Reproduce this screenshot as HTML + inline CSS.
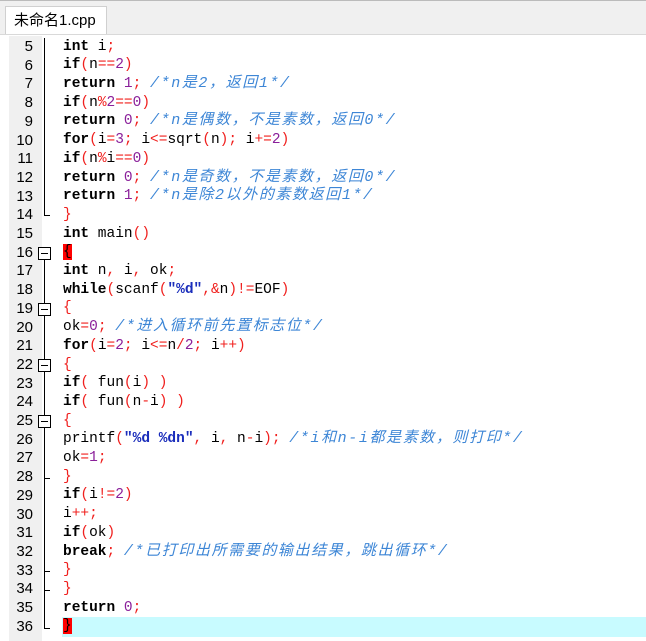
<!DOCTYPE html><html><head><meta charset="utf-8"><style>
body{margin:0;width:646px;height:641px;background:#fff;overflow:hidden;position:relative;font-family:"Liberation Mono","Noto Sans CJK SC",monospace}
.tabbar{position:absolute;left:0;top:0;width:646px;height:34px;background:#f0f0f0;border-top:1px solid #bbb}
.tab{position:absolute;left:5px;top:5px;width:102px;height:29px;background:#fff;border:1px solid #d0d0d0;border-bottom:none;font:15px "Liberation Sans","Noto Sans CJK SC",sans-serif;line-height:27px;padding-left:8px;box-sizing:border-box;color:#000}
.edge{position:absolute;left:0;top:34px;width:646px;height:1px;background:#d9d9d9}
.gut{position:absolute;left:9px;top:36px;width:33px;height:605px;background:#f0f0f0}
.vl{position:absolute;left:44px;width:1px;background:#000}
.box{position:absolute;left:38px;width:13px;height:13px;border:1px solid #000;background:#fff;box-sizing:border-box}
.box:after{content:"";position:absolute;left:2px;top:5px;width:7px;height:1px;background:#000}
.tk{position:absolute;left:44px;width:6px;height:1px;background:#000}
.ln{position:absolute;left:9px;width:24px;text-align:right;font:15px "Liberation Sans",sans-serif;color:#000}
.code{position:absolute;left:63px;top:37.6px;font-size:14.5px;line-height:18.7px;white-space:pre;color:#000}
.cur{position:absolute;left:62px;top:617px;width:584px;height:20px;background:#c8fbff}
b{font-weight:bold}
.p{color:#f0201e}.n{color:#8a1f9a}.c{color:#3d86d6;font-style:italic;font-size:15px;letter-spacing:1.6px}.s{color:#1a2dbb;font-weight:bold}
.hl{background:#f00;color:#000}
</style></head><body>
<div class="tabbar"><div class="tab">未命名1.cpp</div></div>
<div class="edge"></div>
<div class="gut"></div>
<div class="cur"></div>
<div class="vl" style="top:38px;height:178px"></div>
<div class="tk" style="top:215px"></div>
<div class="vl" style="top:260px;height:369px"></div>
<div class="tk" style="top:628px"></div>
<div class="tk" style="top:571px"></div>
<div class="tk" style="top:590px"></div>
<div class="tk" style="top:478px"></div>
<div class="box" style="top:247px"></div>
<div class="box" style="top:303px"></div>
<div class="box" style="top:359px"></div>
<div class="box" style="top:415px"></div>
<div id="nums"></div>
<div class="code"><b>int</b> i<span class="p">;</span>
<b>if</b><span class="p">(</span>n<span class="p">==</span><span class="n">2</span><span class="p">)</span>
<b>return</b> <span class="n">1</span><span class="p">;</span> <span class="c">/*n是2，返回1*/</span>
<b>if</b><span class="p">(</span>n<span class="p">%</span><span class="n">2</span><span class="p">==</span><span class="n">0</span><span class="p">)</span>
<b>return</b> <span class="n">0</span><span class="p">;</span> <span class="c">/*n是偶数，不是素数，返回0*/</span>
<b>for</b><span class="p">(</span>i<span class="p">=</span><span class="n">3</span><span class="p">;</span> i<span class="p">&lt;=</span>sqrt<span class="p">(</span>n<span class="p">);</span> i<span class="p">+=</span><span class="n">2</span><span class="p">)</span>
<b>if</b><span class="p">(</span>n<span class="p">%</span>i<span class="p">==</span><span class="n">0</span><span class="p">)</span>
<b>return</b> <span class="n">0</span><span class="p">;</span> <span class="c">/*n是奇数，不是素数，返回0*/</span>
<b>return</b> <span class="n">1</span><span class="p">;</span> <span class="c">/*n是除2以外的素数返回1*/</span>
<span class="p">}</span>
<b>int</b> main<span class="p">()</span>
<span class="hl">{</span>
<b>int</b> n<span class="p">,</span> i<span class="p">,</span> ok<span class="p">;</span>
<b>while</b><span class="p">(</span>scanf<span class="p">(</span><span class="s">"%d"</span><span class="p">,&amp;</span>n<span class="p">)!=</span>EOF<span class="p">)</span>
<span class="p">{</span>
ok<span class="p">=</span><span class="n">0</span><span class="p">;</span> <span class="c">/*进入循环前先置标志位*/</span>
<b>for</b><span class="p">(</span>i<span class="p">=</span><span class="n">2</span><span class="p">;</span> i<span class="p">&lt;=</span>n<span class="p">/</span><span class="n">2</span><span class="p">;</span> i<span class="p">++)</span>
<span class="p">{</span>
<b>if</b><span class="p">(</span> fun<span class="p">(</span>i<span class="p">)</span> <span class="p">)</span>
<b>if</b><span class="p">(</span> fun<span class="p">(</span>n<span class="p">-</span>i<span class="p">)</span> <span class="p">)</span>
<span class="p">{</span>
printf<span class="p">(</span><span class="s">"%d %dn"</span><span class="p">,</span> i<span class="p">,</span> n<span class="p">-</span>i<span class="p">);</span> <span class="c">/*i和n-i都是素数，则打印*/</span>
ok<span class="p">=</span><span class="n">1</span><span class="p">;</span>
<span class="p">}</span>
<b>if</b><span class="p">(</span>i<span class="p">!=</span><span class="n">2</span><span class="p">)</span>
i<span class="p">++;</span>
<b>if</b><span class="p">(</span>ok<span class="p">)</span>
<b>break</b><span class="p">;</span> <span class="c">/*已打印出所需要的输出结果，跳出循环*/</span>
<span class="p">}</span>
<span class="p">}</span>
<b>return</b> <span class="n">0</span><span class="p">;</span>
<span class="hl">}</span></div>
<script>
var h='';for(var i=5;i<=36;i++){h+='<div class="ln" style="top:'+(38+(i-5)*18.7)+'px">'+i+'</div>';}
document.getElementById('nums').innerHTML=h;
</script>
</body></html>
